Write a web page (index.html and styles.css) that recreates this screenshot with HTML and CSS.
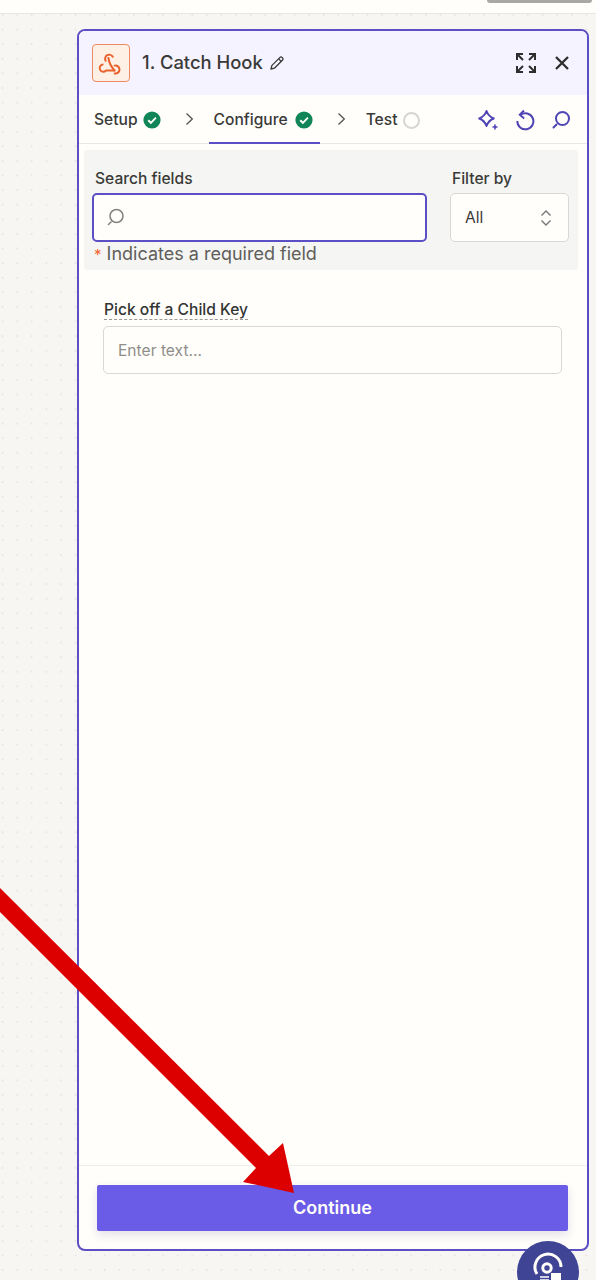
FILE: index.html
```html
<!DOCTYPE html>
<html lang="en">
<head>
<meta charset="utf-8">
<title>Catch Hook</title>
<link rel="stylesheet" href="styles.css">
</head>
<body>
<div class="topbar"><div class="topbar-tab"></div></div>
<main class="canvas">
  <section class="panel">
    <header class="head">
      <div class="app-icon">
        <svg width="26" height="26" viewBox="0 0 26 26" fill="none" stroke="#e9622c" stroke-width="2" stroke-linecap="round" stroke-linejoin="round"><path d="M7.6 10.8 A4 4 0 1 1 14.8 6.8"/><path d="M10.4 8 C10.8 11 13 16.5 16.5 20.5"/><path d="M16.6 15.6 A4 4 0 1 1 16.6 23.4"/><path d="M4.6 14.6 A3.6 3.6 0 1 0 8 20.5 H16.5"/></svg>
      </div>
      <h1 class="title">1. Catch Hook</h1>
      <svg class="pencil" width="16" height="16" viewBox="0 0 16 16" fill="none" stroke="#3b3a36" stroke-width="1.3" stroke-linejoin="round"><path d="M2 14 L2.8 10.6 L11 2.4 a1.4 1.4 0 0 1 2 0 l.6 .6 a1.4 1.4 0 0 1 0 2 L5.4 13.2 Z"/><path d="M9.6 3.8 L12.2 6.4"/></svg>
      <div class="head-actions">
        <svg width="22" height="22" viewBox="0 0 22 22" fill="none" stroke="#2d2e2e" stroke-width="2"><path d="M2 8V2H8M3 3L8 8"/><path d="M20 8V2H14M19 3L14 8"/><path d="M2 14V20H8M3 19L8 14"/><path d="M20 14V20H14M19 19L14 14"/></svg>
        <svg width="16" height="16" viewBox="0 0 16 16" fill="none" stroke="#2d2e2e" stroke-width="2.3"><path d="M2 2L14 14M14 2L2 14"/></svg>
      </div>
    </header>
    <nav class="tabs">
      <div class="tab tab-setup">Setup
        <svg class="check" width="18" height="18" viewBox="0 0 18 18"><circle cx="9" cy="9" r="8.6" fill="#0f8558"/><path d="M5.2 9.2L7.9 11.8L12.9 6.6" fill="none" stroke="#fffefb" stroke-width="1.9"/></svg>
      </div>
      <svg class="chev chev-one" width="9" height="14" viewBox="0 0 9 14" fill="none" stroke="#55544f" stroke-width="1.3"><path d="M1.5 1.5L7.3 7L1.5 12.5"/></svg>
      <div class="tab tab-active">Configure
        <svg class="check" width="18" height="18" viewBox="0 0 18 18"><circle cx="9" cy="9" r="8.6" fill="#0f8558"/><path d="M5.2 9.2L7.9 11.8L12.9 6.6" fill="none" stroke="#fffefb" stroke-width="1.9"/></svg>
      </div>
      <svg class="chev chev-two" width="9" height="14" viewBox="0 0 9 14" fill="none" stroke="#55544f" stroke-width="1.3"><path d="M1.5 1.5L7.3 7L1.5 12.5"/></svg>
      <div class="tab tab-test">Test <span class="ring"></span></div>
      <div class="tab-tools">
        <svg width="22" height="22" viewBox="0 0 22 22" fill="none" stroke="#4f45b5" stroke-width="2" stroke-linejoin="round"><path d="M9.5 2 Q11.5 7.5 16.8 9.5 Q11.5 11.5 9.5 17 Q7.5 11.5 2.2 9.5 Q7.5 7.5 9.5 2 Z"/><path d="M18 15.5 V20.5 M15.5 18 H20.5" stroke-width="1.6"/></svg>
        <svg width="20" height="22" viewBox="0 0 20 22" fill="none" stroke="#4f45b5" stroke-width="2"><path d="M5.5 6 A8 8 0 1 1 2.4 12"/><path d="M9 1.5 L4.8 5.8 L9.2 9.5"/></svg>
        <svg width="20" height="20" viewBox="0 0 20 20" fill="none" stroke="#4f45b5" stroke-width="2"><circle cx="11.5" cy="8.5" r="6.5"/><path d="M5.5 14.5L2.5 17.5" stroke-linecap="round"/></svg>
      </div>
    </nav>
    <div class="body">
      <div class="filters">
        <div class="filter-row">
          <div class="field-search">
            <label class="filter-label">Search fields</label>
            <div class="search-box">
              <svg width="20" height="20" viewBox="0 0 20 20" fill="none" stroke="#858480" stroke-width="1.6"><circle cx="11.5" cy="8" r="6.5"/><path d="M6 14L3.5 16.5" stroke-linecap="round"/></svg>
            </div>
          </div>
          <div class="field-filter">
            <label class="filter-label filter-label-by">Filter by</label>
            <div class="select">All
              <svg width="12" height="18" viewBox="0 0 12 18" fill="none" stroke="#77767a" stroke-width="1.4"><path d="M1.5 6.5L6 2L10.5 6.5"/><path d="M1.5 11.5L6 16L10.5 11.5"/></svg>
            </div>
          </div>
        </div>
        <p class="required"><span class="star">*</span> Indicates a required field</p>
      </div>
      <div class="field">
        <label class="field-label">Pick off a Child Key</label>
        <div class="text-input">Enter text...</div>
      </div>
    </div>
    <footer class="foot">
      <button class="continue">Continue</button>
    </footer>
  </section>
</main>
<svg class="arrow" width="300" height="320" viewBox="0 880 300 320"><path d="M0 888 L269 1156 L283 1143 L294 1193 L243 1182 L256 1168 L0 912 Z" fill="#dc0000"/></svg>
<div class="help">
  <svg width="62" height="62" viewBox="0 0 62 62" fill="none"><path d="M20 33 A13 13 0 1 1 44 26" stroke="#fffefb" stroke-width="3"/><circle cx="30" cy="27" r="4.2" stroke="#fffefb" stroke-width="3"/><rect x="34" y="32" width="10" height="10" fill="#fffefb"/><path d="M23 36H32M23 39H32" stroke="#fffefb" stroke-width="1.6"/></svg>
</div>
</body>
</html>
```

FILE: styles.css
```css
* { box-sizing: border-box; }
html, body { margin: 0; height: 1280px; overflow: hidden; }
body {
  position: relative;
  font-family: Inter, "Liberation Sans", sans-serif;
  background: #f7f6f3;
  color: #2d2e2e;
}
.topbar {
  height: 14px;
  background: #fffefb;
  border-bottom: 1px solid #e8e7e4;
  display: flex;
  justify-content: flex-end;
  padding-right: 4px;
}
.topbar-tab {
  width: 105px;
  height: 3px;
  background: #a8a8a4;
  border-radius: 0 0 3px 3px;
}
.canvas {
  height: 1266px;
  padding: 15px 7px 0 77px;
  background-image: radial-gradient(circle at 2.5px 1px, #e4e3df 0.7px, transparent 1.2px);
  background-size: 14.6px 14.6px;
}
.panel {
  height: 1222px;
  border: 2px solid #5a4fc4;
  border-radius: 8px;
  background: #fffefb;
  display: flex;
  flex-direction: column;
  overflow: hidden;
}
.head {
  height: 64px;
  background: #f4f3ff;
  display: flex;
  align-items: center;
  padding: 0 17px 1px 13px;
  flex: none;
}
.app-icon {
  width: 38px;
  height: 38px;
  border: 1px solid #f0895f;
  border-radius: 4px;
  background: #fff0e6;
  display: flex;
  align-items: center;
  justify-content: center;
}
.title {
  margin: 0 0 2px 12px;
  font-size: 18.4px;
  line-height: 24px;
  font-weight: 500;
  color: #3a3a38;
}
.pencil { margin-left: 6px; }
.head-actions {
  margin-left: auto;
  display: flex;
  align-items: center;
  gap: 17px;
}
.tabs {
  height: 49px;
  flex: none;
  display: flex;
  align-items: center;
  position: relative;
  border-bottom: 1px solid #e9e8e4;
  padding: 2px 0 0 15px;
}
.tab {
  display: flex;
  align-items: center;
  gap: 6px;
  font-size: 15.6px;
  font-weight: 500;
  line-height: 20px;
  color: #3a3a38;
}
.tab-setup { gap: 5px; }
.chev { margin-bottom: 3px; }
.chev-one { margin-left: 24px; }
.chev-two { margin-left: 17px; }
.tab-active {
  margin-left: 15px;
  gap: 7px;
  align-self: stretch;
  padding: 0 7px 0 5px;
  position: relative;
}
.tab-active::after {
  content: "";
  position: absolute;
  left: 0;
  right: 0;
  bottom: -1px;
  height: 2px;
  background: #5a4fc4;
}
.tab-test { margin-left: 20px; }
.ring {
  width: 17px;
  height: 17px;
  border: 2px solid #d6d5d1;
  border-radius: 50%;
}
.tab-tools {
  margin-left: auto;
  padding-right: 16px;
  display: flex;
  align-items: center;
  gap: 16px;
}
.body { flex: 1; padding: 6px 9px 0 5px; }
.filters {
  height: 120px;
  background: #f5f5f3;
  border-radius: 3px;
  padding: 20px 9px 0 8px;
}
.filter-row { display: flex; gap: 23px; }
.field-search { width: 335px; }
.field-filter { flex: 1; }
.filter-label {
  display: block;
  font-size: 15.6px;
  line-height: 18px;
  font-weight: 500;
  color: #3a3a38;
  margin: 0 0 5px 3px;
}
.filter-label-by { margin-left: 2px; }
.search-box {
  height: 49px;
  border: 2px solid #5a4fc4;
  border-radius: 5px;
  background: #fffefb;
  display: flex;
  align-items: center;
  padding-left: 11px;
}
.select {
  height: 49px;
  border: 1px solid #d9d8d4;
  border-radius: 5px;
  background: #fffefb;
  display: flex;
  align-items: center;
  justify-content: space-between;
  padding: 0 16px 0 14px;
  font-size: 15.6px;
  color: #3a3a38;
}
.required {
  margin: 1px 0 0 2px;
  font-size: 18px;
  line-height: 22px;
  color: #5f5e5a;
}
.star { color: #f0652f; font-size: 15px; }
.field { padding: 31px 16px 0 19px; }
.field-label {
  display: block;
  width: fit-content;
  margin-left: 1px;
  font-size: 15.6px;
  line-height: 18px;
  font-weight: 500;
  color: #333432;
  border-bottom: 1px dashed #9a9994;
}
.text-input {
  margin-top: 6px;
  height: 48px;
  border: 1px solid #d9d8d4;
  border-radius: 5px;
  display: flex;
  align-items: center;
  padding-left: 14px;
  font-size: 15.6px;
  color: #8f8e8a;
}
.foot {
  height: 84px;
  flex: none;
  border-top: 1px solid #eeede9;
  padding: 19px 19px 0 18px;
}
.continue {
  display: block;
  width: 100%;
  height: 46px;
  border: 0;
  border-radius: 2px;
  padding: 0 0 2px;
  background: #6a5ce6;
  color: #fffefb;
  font: 600 18px Inter, "Liberation Sans", sans-serif;
  box-shadow: 0 4px 10px rgba(60, 50, 120, 0.14);
}
.arrow { position: absolute; left: 0; top: 880px; }
.help {
  position: absolute;
  left: 517px;
  top: 1241px;
  width: 62px;
  height: 62px;
  border-radius: 50%;
  background: #3f4494;
}
```
